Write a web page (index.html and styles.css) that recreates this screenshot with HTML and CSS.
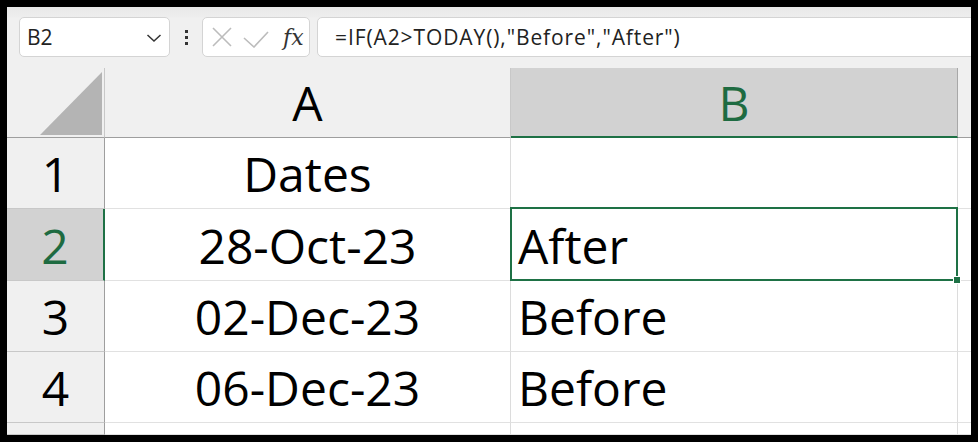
FILE: index.html
```html
<!DOCTYPE html>
<html>
<head>
<meta charset="utf-8">
<link rel="stylesheet" href="styles.css">
</head>
<body>
<div class="app">
  <div class="toolbar">
    <div class="namebox">
      <span class="name">B2</span>
      <svg class="chev" width="16" height="10" viewBox="0 0 16 10"><polyline points="1.5,2 8,8 14.5,2" fill="none" stroke="#333" stroke-width="1.5"/></svg>
    </div>
    <div class="dots"><span></span><span></span><span></span></div>
    <div class="fxbox">
      <svg class="ico" width="22" height="22" viewBox="0 0 22 22"><path d="M2 2 L20 20 M20 2 L2 20" stroke="#bcbcbc" stroke-width="1.6" fill="none"/></svg>
      <svg class="ico" width="26" height="22" viewBox="0 0 26 22"><path d="M1 12 L11 21 L25 6" stroke="#bcbcbc" stroke-width="1.6" fill="none"/></svg>
      <span class="fx">fx</span>
    </div>
    <div class="formula">=IF(A2&gt;TODAY(),"Before","After")</div>
  </div>
  <div class="sheet">
    <div class="corner"><div class="tri"></div></div>
    <div class="colhead">A</div>
    <div class="colhead sel">B</div>
    <div class="colhead last"></div>

    <div class="rowhead">1</div>
    <div class="cell center">Dates</div>
    <div class="cell"></div>
    <div class="cell last"></div>

    <div class="rowhead sel">2</div>
    <div class="cell center">28-Oct-23</div>
    <div class="cell active">After<div class="selbox"><div class="handle"></div></div></div>
    <div class="cell last"></div>

    <div class="rowhead">3</div>
    <div class="cell center">02-Dec-23</div>
    <div class="cell">Before</div>
    <div class="cell last"></div>

    <div class="rowhead">4</div>
    <div class="cell center">06-Dec-23</div>
    <div class="cell">Before</div>
    <div class="cell last"></div>

    <div class="rowhead"></div>
    <div class="cell"></div>
    <div class="cell"></div>
    <div class="cell last"></div>
  </div>
</div>
</body>
</html>
```
FILE: styles.css
```css
html, body { margin: 0; padding: 0; }
body {
  background: #000;
  padding: 7px;
  width: 964px;
  height: 428px;
  overflow: hidden;
}
.app {
  width: 964px;
  height: 428px;
  background: #f0f0f0;
  overflow: hidden;
  display: flex;
  flex-direction: column;
}
.toolbar {
  height: 61px;
  box-sizing: border-box;
  padding: 10px 0 0 12px;
  display: flex;
  align-items: flex-start;
  background: linear-gradient(#e9e9e9 0, #eeeeee 10px, #f0f0f0 11px);
  overflow: hidden;
  flex: none;
}
.namebox {
  width: 151px;
  height: 40px;
  box-sizing: border-box;
  background: #fff;
  border: 1px solid #d4d4d4;
  border-radius: 5px;
  display: flex;
  align-items: center;
  justify-content: space-between;
  padding: 0 7px 0 7px;
  font-family: "Open Sans", sans-serif;
  font-size: 21px;
  color: #222;
}
.chev { margin-top: 2px; }
.dots {
  width: 32px;
  height: 40px;
  display: flex;
  flex-direction: column;
  align-items: center;
  justify-content: center;
  gap: 3px;
}
.dots span {
  width: 3px;
  height: 3px;
  background: #333;
}
.fxbox {
  width: 108px;
  height: 40px;
  box-sizing: border-box;
  background: #fff;
  border: 1px solid #d4d4d4;
  border-radius: 5px;
  display: flex;
  align-items: center;
  padding-left: 8px;
  gap: 10px;
}
.fx {
  font-family: "DejaVu Serif", "Liberation Serif", serif;
  font-style: italic;
  font-size: 22px;
  color: #333;
  margin-left: 4px;
}
.formula {
  flex: 1;
  height: 40px;
  box-sizing: border-box;
  margin-left: 7px;
  margin-right: -10px;
  background: #fff;
  border: 1px solid #d4d4d4;
  border-radius: 5px;
  padding-left: 17px;
  display: flex;
  align-items: center;
  font-family: "Open Sans", sans-serif;
  font-size: 21px;
  letter-spacing: 0.9px;
  color: #222;
  white-space: nowrap;
}
.sheet {
  display: grid;
  grid-template-columns: 98px 406px 447px 13px;
  grid-template-rows: 70px 71px 72px 71px 71px 12px;
  font-family: "Open Sans", sans-serif;
  font-size: 48px;
  color: #000;
}
.sheet > div {
  box-sizing: border-box;
  line-height: 48px;
  display: flex;
  align-items: flex-end;
  white-space: nowrap;
  overflow: visible;
}
.corner {
  background: #f0f0f0;
  border-right: 1px solid #c8c8c8;
  border-bottom: 1px solid #9e9e9e;
  align-items: flex-end !important;
  justify-content: flex-end;
  padding: 0 2px 2px 0;
}
.tri {
  width: 62px;
  height: 63px;
  background: #b4b4b4;
  clip-path: polygon(100% 0, 100% 100%, 0 100%);
}
.colhead {
  background: #f0f0f0;
  border-right: 1px solid #c8c8c8;
  border-bottom: 1px solid #9e9e9e;
  justify-content: center;
  padding-bottom: 10px;
}
.colhead.sel {
  background: #d2d2d2;
  color: #1e6b41;
  border-right: 1px solid #a8a8a8;
  border-bottom: 2px solid #1e7145;
  padding-bottom: 9px;
}
.colhead.last, .cell.last { border-right: none; }
.rowhead {
  background: #f0f0f0;
  border-right: 1px solid #9e9e9e;
  border-bottom: 1px solid #c8c8c8;
  justify-content: center;
  padding-bottom: 10px;
}
.rowhead.sel {
  background: #d2d2d2;
  color: #1e6b41;
  border-right: 2px solid #1e7145;
}
.cell {
  background: #fff;
  border-right: 1px solid #dcdcdc;
  border-bottom: 1px solid #e1e1e1;
  padding-left: 7px;
  padding-bottom: 10px;
}
.cell.center { justify-content: center; padding-left: 0; }
.cell.active { position: relative; }
.selbox {
  position: absolute;
  left: -1px;
  top: -2px;
  right: -1px;
  bottom: -1px;
  border: 2px solid #1e7145;
}
.handle {
  position: absolute;
  right: -5px;
  bottom: -5px;
  width: 6px;
  height: 6px;
  background: #1e7145;
  border: 1px solid #fff;
}
```
